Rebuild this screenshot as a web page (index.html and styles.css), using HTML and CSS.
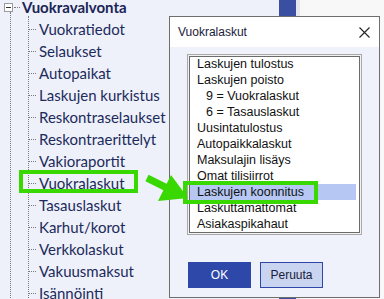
FILE: index.html
```html
<!DOCTYPE html>
<html lang="fi">
<head>
    <meta charset="UTF-8">
    <meta name="viewport" content="width=device-width, initial-scale=1.0">
    <title>Vuokralaskut</title>
    <link rel="stylesheet" href="styles.css">
</head>
<body>
    <div class="app">
        <div class="tree">
            <div class="root">
                <span class="toggle"><span class="minus"></span></span>
                <span class="root-dots"></span>
                <span class="root-label">Vuokravalvonta</span>
            </div>
            <div class="level1">
                <ul class="level2">
                    <li class="node">Vuokratiedot</li>
                    <li class="node">Selaukset</li>
                    <li class="node">Autopaikat</li>
                    <li class="node">Laskujen kurkistus</li>
                    <li class="node">Reskontraselaukset</li>
                    <li class="node">Reskontraerittelyt</li>
                    <li class="node">Vakioraportit</li>
                    <li class="node">Vuokralaskut</li>
                    <li class="node">Tasauslaskut</li>
                    <li class="node">Karhut/korot</li>
                    <li class="node">Verkkolaskut</li>
                    <li class="node">Vakuusmaksut</li>
                    <li class="node">Isännöinti</li>
                </ul>
            </div>
        </div>
        <div class="bar"></div>
        <div class="divider"></div>
        <div class="side"></div>
    </div>

    <div class="dialog">
        <div class="titlebar">
            <span class="title">Vuokralaskut</span>
            <svg class="close" width="11" height="11" viewBox="0 0 11 11">
                <path d="M0.5 0.5 L10.5 10.5 M10.5 0.5 L0.5 10.5" stroke="#222" stroke-width="1.1" fill="none"/>
            </svg>
        </div>
        <div class="dialog-body">
            <ul class="listbox">
                <li class="item">Laskujen tulostus</li>
                <li class="item">Laskujen poisto</li>
                <li class="item sub">9 = Vuokralaskut</li>
                <li class="item sub">6 = Tasauslaskut</li>
                <li class="item">Uusintatulostus</li>
                <li class="item">Autopaikkalaskut</li>
                <li class="item">Maksulajin lisäys</li>
                <li class="item">Omat tilisiirrot</li>
                <li class="item selected">Laskujen koonnitus</li>
                <li class="item">Laskuttamattomat</li>
                <li class="item">Asiakaspikahaut</li>
            </ul>
            <div class="actions">
                <button class="btn btn-ok">OK</button>
                <button class="btn btn-cancel">Peruuta</button>
            </div>
        </div>
    </div>

    <div class="mark mark-tree"></div>
    <div class="mark mark-list"></div>
    <svg class="arrow" width="50" height="40" viewBox="0 0 50 40">
        <path d="M7 10 L27 20" stroke="#38d800" stroke-width="7" fill="none"/>
        <polygon points="31,7 48,30 18,33" fill="#38d800"/>
    </svg>
</body>
</html>
```

FILE: styles.css
```css
body { margin: 0; width: 384px; height: 299px; overflow: hidden; position: relative; font-family: "Liberation Sans", Arial, sans-serif; }
ul { list-style: none; margin: 0; padding: 0; }

.app { display: flex; height: 299px; }
.tree { width: 279px; background: #eef1f9; color: #1c2a5c; font-family: Lato, "Liberation Sans", sans-serif; font-size: 15px; }
.bar { width: 17px; background: #3a4fa1; }
.divider { width: 4px; background: #e6e7ec; }
.side { flex: 1; background: #f8f8f8; }

.root { height: 22px; margin-top: -4px; display: flex; align-items: center; }
.toggle { width: 7px; height: 7px; margin-left: 4px; border: 1px solid #9a9a9a; background: #fff; display: flex; align-items: center; justify-content: center; }
.minus { width: 5px; height: 1px; background: #333; }
.root-dots { width: 6px; margin-left: 1px; border-top: 1px dotted #7a7a7a; }
.root-label { margin-left: 2px; font-weight: bold; color: #1a2456; }

.level1 { margin-left: 10px; margin-top: -6px; padding-top: 6px; padding-left: 17px; border-left: 1px dotted #7a7a7a; }
.level2 { margin-top: -2px; padding-top: 2px; border-left: 1px dotted #7a7a7a; }
.node { height: 22px; display: flex; align-items: center; }
.node::before { content: ""; width: 7px; margin-right: 3px; border-top: 1px dotted #7a7a7a; }

.dialog { position: absolute; left: 169px; top: 16px; width: 211px; height: 282px; box-sizing: border-box; border: 1px solid #6e6e6e; background: #eff2fa; display: flex; flex-direction: column; }
.titlebar { height: 30px; background: #fff; display: flex; align-items: center; justify-content: space-between; padding: 0 9px 0 8px; }
.title { font-size: 12px; color: #1a1a3a; }
.close { margin-top: 1px; }
.dialog-body { padding: 7px 17px 0 17px; }

.listbox { height: 181px; box-sizing: border-box; border: 1px solid #a9a9a9; box-shadow: inset 0 0 0 1px #f2f2f2, inset 0 0 0 2px #6b6b6b; background: #fff; padding-top: 1px; }
.item { height: 16px; line-height: 16px; font-size: 12.5px; color: #111; margin: 0 5px 0 2px; padding-left: 7px; white-space: nowrap; }
.item.sub { padding-left: 16px; }
.item.selected { background: #b6c7f3; }

.actions { display: flex; gap: 9px; margin-top: 27px; margin-left: 1px; }
.btn { width: 63px; height: 26px; box-sizing: border-box; font-family: "Liberation Sans", Arial, sans-serif; font-size: 12px; padding: 0; }
.btn-ok { background: #2d48a8; color: #fff; border: 1px solid #2d48a8; }
.btn-cancel { background: #c9d5f0; color: #1a1a3a; border: 1px solid #2d48a8; }

.mark { position: absolute; box-sizing: border-box; border: 4px solid #38d800; }
.mark-tree { left: 19px; top: 170px; width: 119px; height: 23px; }
.mark-list { left: 183px; top: 181px; width: 135px; height: 23px; }
.arrow { position: absolute; left: 140px; top: 168px; }
```
